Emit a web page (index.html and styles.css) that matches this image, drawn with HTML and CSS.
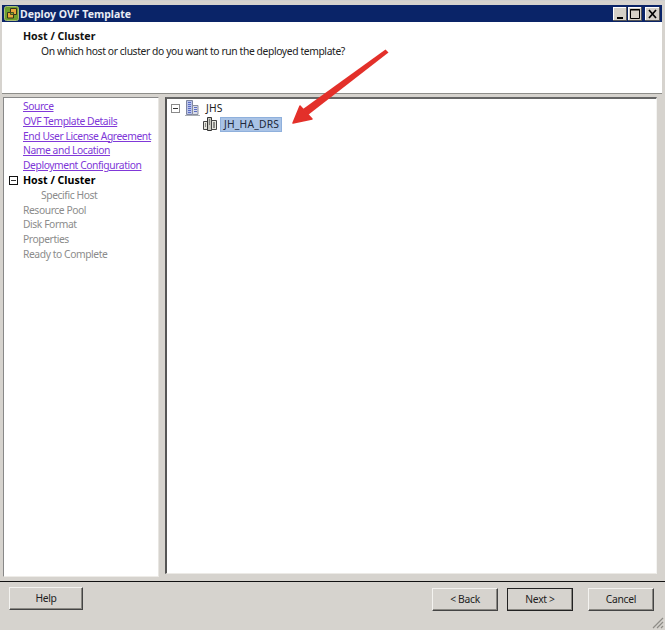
FILE: index.html
```html
<!DOCTYPE html>
<html lang="en">
<head>
<meta charset="utf-8">
<title>Deploy OVF Template</title>
<link rel="stylesheet" href="styles.css">
</head>
<body>
<div class="window">
  <div class="titlebar">
    <svg class="app-icon" width="15" height="15" viewBox="0 0 15 15">
      <rect x="0.5" y="0.5" width="14" height="14" rx="2" fill="#6fa02c" stroke="#a9bd72"/>
      <path d="M6.500 2.500h6v6h-3v3.500h-6V6.500h3z" fill="#e8a93a" stroke="#33351c"/>
      <path d="M6.500 6.500h3v2h-3z" fill="#7fae30" stroke="#33351c" stroke-width="0.8"/>
    </svg>
    <span class="title">Deploy OVF Template</span>
    <div class="win-buttons">
      <div class="win-btn"><svg width="14" height="14" viewBox="0 0 14 14"><rect x="4" y="10" width="6" height="2" fill="#000"/></svg></div>
      <div class="win-btn"><svg width="14" height="14" viewBox="0 0 14 14"><path d="M2.500 2.500h9v9h-9z M2 3h10" fill="none" stroke="#000"/></svg></div>
      <div class="win-btn win-close"><svg width="15" height="14" viewBox="0 0 15 14"><path d="M4 3l7 8M11 3l-7 8" fill="none" stroke="#000" stroke-width="1.700"/></svg></div>
    </div>
  </div>
  <header class="banner">
    <h1 class="banner-title">Host / Cluster</h1>
    <p class="banner-text">On which host or cluster do you want to run the deployed template?</p>
  </header>
  <main class="content">
    <nav class="steps">
      <a class="step" href="#">Source</a>
      <a class="step" href="#">OVF Template Details</a>
      <a class="step" href="#">End User License Agreement</a>
      <a class="step" href="#">Name and Location</a>
      <a class="step" href="#">Deployment Configuration</a>
      <div class="step step-current">
        <span class="collapse collapse-dark"></span>
        <span>Host / Cluster</span>
      </div>
      <div class="step step-off step-sub">Specific Host</div>
      <div class="step step-off">Resource Pool</div>
      <div class="step step-off">Disk Format</div>
      <div class="step step-off">Properties</div>
      <div class="step step-off">Ready to Complete</div>
    </nav>
    <section class="tree">
      <div class="tree-row">
        <span class="collapse"></span>
        <svg class="dc-icon" width="15" height="16" viewBox="0 0 15 16">
          <path d="M1.500 0.500h6v14h-6z" fill="#b9c3ea" stroke="#7f86a0"/>
          <path d="M7.500 5.500h5.500v9H7.500z" fill="#d9dce8" stroke="#8a8f9f"/>
          <path d="M3 2.500h3M3 4.500h3M3 6.500h3M3 8.500h3M3 10.500h3M3 12.500h3M9 7.500h3M9 9.500h3M9 11.500h3" stroke="#5a6cc4"/>
          <path d="M0 15.500h15" stroke="#a8adb4"/>
        </svg>
        <span class="tree-label">JHS</span>
      </div>
      <div class="tree-row tree-child">
        <svg class="cluster-icon" width="14" height="16" viewBox="0 0 14 16">
          <path d="M0.500 5.500h4v8h-4z" fill="#e4e4dc" stroke="#444"/>
          <path d="M4.500 1.500h4v13h-4z" fill="#c9c9c0" stroke="#333"/>
          <path d="M8.500 4.500h5v9h-5z" fill="#e4e4dc" stroke="#444"/>
          <path d="M6 4h1M6 6h1M6 8h1M2 8h1M10 7h2M10 9h2M2 10h1M10 11h2" stroke="#333"/>
        </svg>
        <span class="tree-selected">JH_HA_DRS</span>
      </div>
    </section>
  </main>
  <footer class="footer">
    <button class="btn btn-help" type="button">Help</button>
    <div class="nav-buttons">
      <button class="btn btn-small btn-back" type="button">&lt; Back</button>
      <button class="btn btn-small btn-default" type="button">Next &gt;</button>
      <button class="btn btn-small btn-cancel" type="button">Cancel</button>
    </div>
    <svg class="grip" width="13" height="13" viewBox="0 0 13 13">
      <path d="M12 2L2 12M12 6L6 12M12 10l-2 2" stroke="#8f8d88" stroke-width="1.200"/>
    </svg>
  </footer>
  <svg class="arrow" width="100" height="90" viewBox="0 0 100 90">
    <path d="M95.500 5.500 L98.500 8.500 L18 71 L13 65 Z" fill="#e3302a"/>
    <path d="M3 79 L10 62 L22 75 Z" fill="#e3302a" stroke="#e3302a" stroke-width="1.500" stroke-linejoin="round"/>
  </svg>
</div>
</body>
</html>
```

FILE: styles.css
```css
* { box-sizing: border-box; }
html, body { margin: 0; padding: 0; }
body {
  width: 665px;
  height: 630px;
  overflow: hidden;
  background: #d4d0c8;
  font-family: "Noto Sans", "Open Sans", sans-serif;
  font-size: 10.3px;
  color: #222;
}
.window {
  position: relative;
  width: 665px;
  height: 630px;
  padding-top: 4px;
  display: flex;
  flex-direction: column;
  background: #d6d3ce;
  border-top: 1px solid #cfcfcf;
}
.titlebar {
  height: 17px;
  margin: 0 3px 0 2px;
  flex: none;
  display: flex;
  align-items: center;
  padding: 0 2px 0 2px;
  background: #0a2468;
  color: #e8ecf4;
}
.app-icon { flex: none; }
.title {
  margin-left: 1px;
  font-weight: bold;
  font-size: 10.5px;
}
.win-buttons { margin-left: auto; display: flex; gap: 1px; }
.win-btn {
  width: 14px;
  height: 14px;
  background: #d4d0c8;
  box-shadow: inset -1px -1px 0 #555, inset 1px 1px 0 #fff;
}
.win-btn svg { display: block; }
.win-close { width: 15px; margin-left: 2px; }
.banner {
  flex: none;
  height: 72px;
  margin: 0 3px 0 2px;
  padding: 8px 21px 0;
  background: #fff;
  border-bottom: 1px solid #8e8e8a;
}
.banner-title {
  margin: 0;
  font-size: 10.6px;
  font-weight: bold;
  line-height: 13px;
  color: #111;
}
.banner-text {
  margin: 2px 0 0 18px;
  line-height: 13px;
  letter-spacing: -0.38px;
  color: #222;
}
.content {
  flex: none;
  height: 488px;
  padding: 3px 8px 3px 3px;
  display: flex;
  gap: 6px;
  border-bottom: 1px solid #111;
}
.steps {
  width: 156px;
  height: 480px;
  padding: 1px 0 0 19px;
  display: flex;
  flex-direction: column;
  background: #fff;
  border: 1px solid #888;
  border-right-color: #e8e6e2;
  border-bottom-color: #eeece8;
}
.step {
  height: 14.8px;
  flex: none;
  line-height: 14px;
  letter-spacing: -0.42px;
  white-space: nowrap;
}
a.step { color: #8038d8; text-decoration: underline; }
.step-current {
  position: relative;
  font-size: 10.6px;
  letter-spacing: 0;
  font-weight: bold;
  color: #000;
  display: flex;
  align-items: center;
}
.step-current .collapse { position: absolute; left: -14px; top: 3px; }
.step-off { color: #8c8c8c; }
.step-sub { padding-left: 18px; }
.collapse {
  position: relative;
  display: inline-block;
  flex: none;
  width: 9px;
  height: 9px;
  background: #fff;
  border: 1px solid #8a8a8a;
}
.collapse::after {
  content: "";
  position: absolute;
  left: 1px;
  top: 3px;
  width: 5px;
  height: 1px;
  background: #333;
}
.collapse-dark { border-color: #111; }
.tree {
  flex: 1;
  height: 477px;
  padding: 1px 0 0 4px;
  background: #fff;
  border: 2px solid #555;
  border-right: 1px solid #f4f4f2;
  border-bottom: 1px solid #eceae6;
  border-top-color: #666;
}
.tree-row {
  height: 16px;
  display: flex;
  align-items: center;
}
.tree-row .dc-icon { margin-left: 5px; }
.tree-label { margin-left: 6px; letter-spacing: 0.2px; }
.tree-child { padding-left: 32px; }
.tree-selected {
  margin-left: 3px;
  padding: 0 2px 0 3px;
  height: 15px;
  line-height: 13px;
  letter-spacing: 0.2px;
  background: #a9c3e6;
  border: 1px solid #8fb0dc;
  color: #20283a;
}
.footer {
  position: relative;
  flex: 1;
  display: flex;
  padding: 5px 11px 0 9px;
}
.btn {
  height: 23px;
  padding: 0 0 2px;
  font: inherit;
  letter-spacing: -0.3px;
  color: #222;
  background: #d6d3ce;
  border: 1px solid #444;
  border-top-color: #f4f3f0;
  border-left-color: #f4f3f0;
  box-shadow: inset -1px -1px 0 #8a8883;
}
.btn-help { width: 74px; }
.nav-buttons { margin-left: auto; display: flex; gap: 8px; padding-top: 1px; }
.btn-small { width: 66px; }
.btn-back { margin-right: 1px; }
.btn-default { outline: 1px solid #222; outline-offset: -1px; }
.btn-cancel { margin-left: 7px; }
.grip { position: absolute; right: 1px; bottom: 1px; }
.arrow { position: absolute; left: 290px; top: 43px; }
```
